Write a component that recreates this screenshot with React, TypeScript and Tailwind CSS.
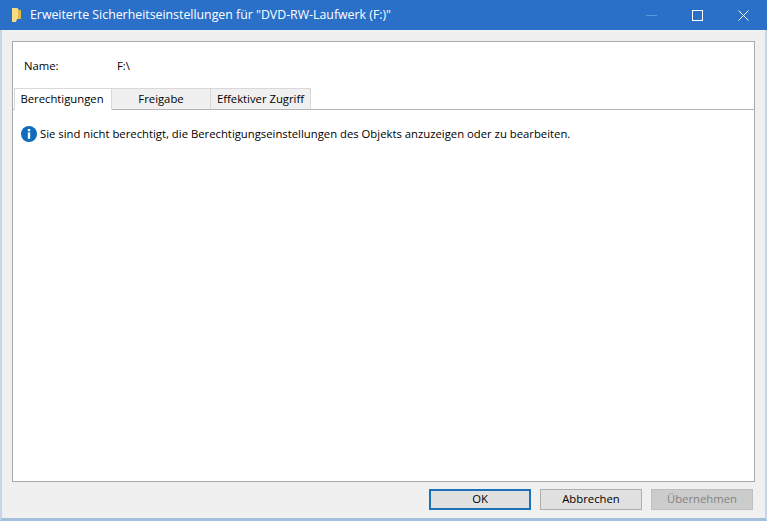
function FolderIcon() {
  return (
    <svg width="10" height="14" viewBox="0 0 10 14">
      <path d="M0 0h5.5l1 2H9v9H5l-1 3H0z" fill="#f6dc84" />
      <path d="M6 1l1 1h2v9H6z" fill="#e3b945" />
    </svg>
  );
}

function InfoIcon() {
  return (
    <svg width="16" height="16" viewBox="0 0 16 16">
      <circle cx="8" cy="8" r="8" fill="#0f6cbd" />
      <rect x="6.8" y="3" width="2.4" height="2.2" fill="#fff" />
      <rect x="6.8" y="6.4" width="2.4" height="6.4" fill="#fff" />
    </svg>
  );
}

export default function App() {
  return (
    <div className="flex h-[521px] w-[767px] flex-col overflow-hidden bg-[#f0f0f0] font-['Open_Sans','Noto_Sans',sans-serif] text-[11.3px] text-black">
      {/* Titelleiste */}
      <div className="flex h-[30px] shrink-0 items-center bg-[#2a70c8] pl-[12px] text-[12.33px] text-white">
        <FolderIcon />
        <span className="ml-[8px] flex-1 whitespace-nowrap">Erweiterte Sicherheitseinstellungen für "DVD-RW-Laufwerk (F:)"</span>
        <div className="flex items-center pr-[1px]">
          <div className="flex w-[46px] justify-center">
            <svg width="11" height="11" viewBox="0 0 11 11"><path d="M0 5.5h11" stroke="#5a9be0" /></svg>
          </div>
          <div className="flex w-[46px] justify-center">
            <svg width="11" height="11" viewBox="0 0 11 11"><rect x="0.5" y="0.5" width="10" height="10" fill="none" stroke="#fff" /></svg>
          </div>
          <div className="flex w-[46px] justify-center">
            <svg width="11" height="11" viewBox="0 0 11 11"><path d="M0.5 0.5l10 10M10.5 0.5l-10 10" fill="none" stroke="#fff" /></svg>
          </div>
        </div>
      </div>
      {/* Inhalt */}
      <div className="flex flex-1 flex-col border-x-2 border-b-[3px] border-x-[#c6d6ea] border-b-[#a4bedd] px-[10px] pt-[11px]">
        <div className="flex h-[441px] flex-col border border-[#a9a9a9] bg-white">
          <div className="flex h-[46px] shrink-0 items-end pb-[13px] pl-[11px]">
            <span className="w-[93px]">Name:</span>
            <span>F:\</span>
          </div>
          <div className="flex h-[22px] shrink-0 items-stretch border-b border-[#b5b5b5] pl-[1px]">
            <div className="-mb-px flex w-[98px] items-center justify-center border-x border-t border-[#d9d9d9] bg-white pr-[2px]">Berechtigungen</div>
            <div className="flex w-[99px] items-center justify-center border-r border-t border-[#d9d9d9] bg-[#f0f0f0]">Freigabe</div>
            <div className="flex w-[100px] items-center justify-center border-r border-t border-[#d9d9d9] bg-[#f0f0f0]">Effektiver Zugriff</div>
          </div>
          <div className="flex items-center gap-[3px] pl-[8px] pt-[16px]">
            <InfoIcon />
            <span>Sie sind nicht berechtigt, die Berechtigungseinstellungen des Objekts anzuzeigen oder zu bearbeiten.</span>
          </div>
        </div>
        <div className="flex justify-end gap-[9px] pr-[2px] pt-[7px]">
          <button className="h-[21px] w-[102px] border-2 border-[#1c72b8] bg-[#e1e1e1]">OK</button>
          <button className="h-[21px] w-[102px] border border-[#adadad] bg-[#e1e1e1]">Abbrechen</button>
          <button className="h-[21px] w-[102px] border border-[#bfbfbf] bg-[#cccccc] text-[#838383]">Übernehmen</button>
        </div>
      </div>
    </div>
  );
}
